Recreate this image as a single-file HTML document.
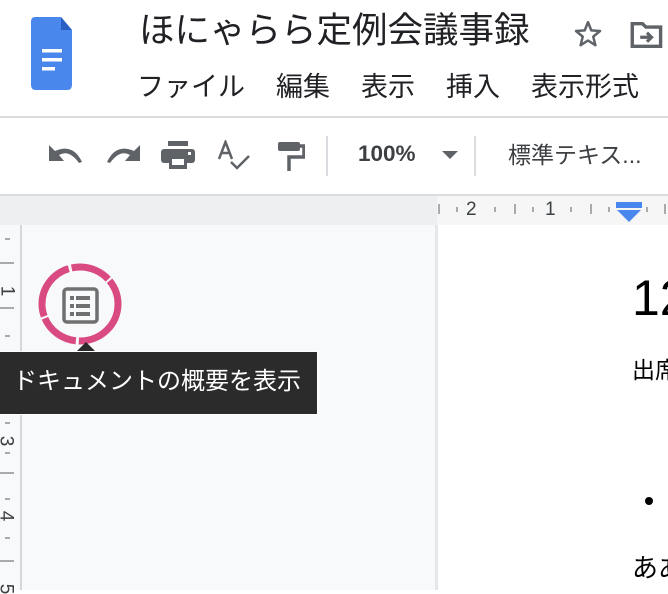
<!DOCTYPE html>
<html><head><meta charset="utf-8"><style>
*{margin:0;padding:0;box-sizing:border-box}
body{width:668px;height:590px;overflow:hidden;background:#fff;position:relative;font-family:"Liberation Sans","Noto Sans CJK JP",sans-serif;color:#202124}
.a{position:absolute;white-space:nowrap}
</style></head><body>
<svg class="a" style="left:31px;top:17px" width="42" height="74" viewBox="0 0 42 74">
<path d="M4 0H30L41 13V68Q41 73 36 73H5Q0 73 0 68V5Q0 0 4 0Z" fill="#4a87ec"/>
<path d="M30 0L41 13H30Z" fill="#2a5fc4"/>
<rect x="11" y="32" width="20" height="3.5" fill="#fff"/><rect x="11" y="41" width="20" height="3.5" fill="#fff"/><rect x="11" y="50" width="13" height="3.5" fill="#fff"/>
</svg>
<div class="a" style="left:139px;top:8px;font-size:35.5px;line-height:44px">ほにゃらら定例会議事録</div>
<svg class="a" style="left:572px;top:19px" width="32" height="30" viewBox="0 0 24 24"><path d="M12 2.5l2.6 6.6 7 .5-5.4 4.5 1.7 6.9L12 17.2 6.1 21l1.7-6.9-5.4-4.5 7-.5z" fill="none" stroke="#5f6368" stroke-width="2" stroke-linejoin="round"/></svg>
<svg class="a" style="left:630px;top:20px" width="34" height="30" viewBox="0 0 30 26"><path d="M2 3h9l3 3h13v17H2z" fill="none" stroke="#5f6368" stroke-width="3"/><path d="M9 15h9M15 11l4 4-4 4" fill="none" stroke="#5f6368" stroke-width="2.8"/></svg>
<div class="a" style="left:137px;top:70px;font-size:27px;line-height:34px">ファイル</div>
<div class="a" style="left:276px;top:70px;font-size:27px;line-height:34px">編集</div>
<div class="a" style="left:361px;top:70px;font-size:27px;line-height:34px">表示</div>
<div class="a" style="left:446px;top:70px;font-size:27px;line-height:34px">挿入</div>
<div class="a" style="left:531px;top:70px;font-size:27px;line-height:34px">表示形式</div>
<div class="a" style="left:0;top:116px;width:668px;height:2px;background:#dadce0"></div>
<svg class="a" style="left:49px;top:143px" width="34" height="22" viewBox="0 0 34 22"><path d="M0 2V18H15L10 12Q20 6 30 20L33 19Q24 0 6 8Z" fill="#5f6368"/></svg>
<svg class="a" style="left:106px;top:143px" width="34" height="22" viewBox="0 0 34 22"><g transform="translate(34 0) scale(-1 1)"><path d="M0 2V18H15L10 12Q20 6 30 20L33 19Q24 0 6 8Z" fill="#5f6368"/></g></svg>
<svg class="a" style="left:161px;top:141px" width="34" height="28" viewBox="0 0 34 28"><rect x="7" y="0" width="20" height="5" fill="#5f6368"/><rect x="0" y="8" width="34" height="14" rx="3" fill="#5f6368"/><rect x="8" y="15" width="18" height="13" fill="#5f6368"/><rect x="11" y="18" width="12" height="6" fill="#fff"/><rect x="27" y="11" width="3" height="3" fill="#fff"/></svg>
<svg class="a" style="left:218px;top:140px" width="34" height="31" viewBox="0 0 34 31"><path d="M1 19L7.5 2L14 19M4 13H11" fill="none" stroke="#5f6368" stroke-width="2.5"/><path d="M13 22l6 6 12-12" fill="none" stroke="#5f6368" stroke-width="2.5"/></svg>
<svg class="a" style="left:278px;top:142px" width="27" height="29" viewBox="0 0 27 29"><rect x="0" y="0" width="22" height="9" rx="2" fill="#5f6368"/><path d="M22 4H26V15H11V29" fill="none" stroke="#5f6368" stroke-width="3.5"/></svg>
<div class="a" style="left:326px;top:136px;width:2px;height:40px;background:#dadce0"></div>
<div class="a" style="left:358px;top:140px;font-size:22.5px;line-height:28px;color:#3c4043;font-weight:bold;-webkit-text-stroke:0;font-weight:600">100%</div>
<svg class="a" style="left:442px;top:151px" width="16" height="9"><path d="M0 0H16L8 8Z" fill="#5f6368"/></svg>
<div class="a" style="left:474px;top:136px;width:2px;height:40px;background:#dadce0"></div>
<div class="a" style="left:508px;top:140px;font-size:23px;line-height:30px;color:#3c4043">標準テキス...</div>
<div class="a" style="left:0;top:194px;width:668px;height:2px;background:#dadce0"></div>
<div class="a" style="left:0;top:196px;width:668px;height:29px;background:#eeeff1"></div>
<div class="a" style="left:437px;top:196px;width:231px;height:29px;background:#f6f6f6"></div>
<div class="a" style="left:438px;top:204px;width:2px;height:10px;background:#aaa"></div>
<div class="a" style="left:456px;top:207px;width:2px;height:5px;background:#aaa"></div>
<div class="a" style="left:466px;top:199px;font-size:19px;color:#3c4043">2</div>
<div class="a" style="left:494px;top:207px;width:2px;height:5px;background:#aaa"></div>
<div class="a" style="left:514px;top:204px;width:2px;height:10px;background:#aaa"></div>
<div class="a" style="left:532px;top:207px;width:2px;height:5px;background:#aaa"></div>
<div class="a" style="left:545px;top:199px;font-size:19px;color:#3c4043">1</div>
<div class="a" style="left:570px;top:207px;width:2px;height:5px;background:#aaa"></div>
<div class="a" style="left:590px;top:204px;width:2px;height:10px;background:#aaa"></div>
<div class="a" style="left:608px;top:207px;width:2px;height:5px;background:#aaa"></div>
<svg class="a" style="left:616px;top:202px" width="26" height="20"><rect x="0" y="0" width="26" height="6" fill="#4a87ec"/><path d="M1 8H25L13 20Z" fill="#4a87ec"/></svg>
<div class="a" style="left:646px;top:207px;width:2px;height:5px;background:#aaa"></div>
<div class="a" style="left:664px;top:204px;width:2px;height:10px;background:#aaa"></div>
<div class="a" style="left:0;top:225px;width:21px;height:365px;background:#f8f9fa"></div>
<div class="a" style="left:20px;top:225px;width:2px;height:365px;background:#d5d6d8"></div>
<div class="a" style="left:22px;top:225px;width:415px;height:365px;background:#f8f9fa"></div>
<div class="a" style="left:435px;top:225px;width:3px;height:365px;background:#e6e7e9"></div>
<div class="a" style="left:438px;top:225px;width:230px;height:365px;background:#fff"></div>
<div class="a" style="left:5px;top:238px;width:5px;height:2px;background:#aaa"></div>
<div class="a" style="left:0;top:262px;width:14px;height:2px;background:#aaa"></div>
<div class="a" style="left:5px;top:335px;width:5px;height:2px;background:#aaa"></div>
<div class="a" style="left:0;top:307px;width:14px;height:2px;background:#aaa"></div>
<div class="a" style="left:1px;top:280px;font-size:19px;transform:rotate(90deg);color:#3c4043">1</div>
<div class="a" style="left:0;top:358px;width:14px;height:2px;background:#aaa"></div>
<div class="a" style="left:5px;top:422px;width:5px;height:2px;background:#aaa"></div>
<div class="a" style="left:0px;top:430px;font-size:19px;transform:rotate(90deg);color:#3c4043">3</div>
<div class="a" style="left:5px;top:452px;width:5px;height:2px;background:#aaa"></div>
<div class="a" style="left:0;top:472px;width:14px;height:2px;background:#aaa"></div>
<div class="a" style="left:5px;top:498px;width:5px;height:2px;background:#aaa"></div>
<div class="a" style="left:0px;top:505px;font-size:19px;transform:rotate(90deg);color:#3c4043">4</div>
<div class="a" style="left:5px;top:537px;width:5px;height:2px;background:#aaa"></div>
<div class="a" style="left:0;top:560px;width:14px;height:2px;background:#aaa"></div>
<div class="a" style="left:0px;top:578px;font-size:19px;transform:rotate(90deg);color:#3c4043">5</div>
<svg class="a" style="left:36px;top:260px" width="90" height="90"><ellipse cx="44" cy="44" rx="38" ry="37" fill="none" stroke="#d94a82" stroke-width="7" stroke-dasharray="60 3 40 2"/></svg>
<svg class="a" style="left:62px;top:287px" width="37" height="37" viewBox="0 0 37 37"><rect x="2" y="2" width="33" height="33" rx="3" fill="none" stroke="#707070" stroke-width="3.5"/><rect x="8" y="9" width="4" height="4" fill="#707070"/><rect x="14" y="9" width="14" height="4" fill="#707070"/><rect x="8" y="17" width="4" height="4" fill="#707070"/><rect x="14" y="17" width="14" height="4" fill="#707070"/><rect x="8" y="25" width="4" height="4" fill="#707070"/><rect x="14" y="25" width="14" height="4" fill="#707070"/></svg>
<svg class="a" style="left:76px;top:340px" width="20" height="12"><path d="M0 12L10 2L20 12Z" fill="#2b2b2b"/></svg>
<div class="a" style="left:0;top:351px;width:318px;height:64px;background:#2b2b2b;border:1px solid #fff;border-left:none"></div>
<div class="a" style="left:13px;top:366px;font-size:24px;line-height:32px;color:#fff">ドキュメントの概要を表示</div>
<div class="a" style="left:632px;top:268px;font-size:50px;line-height:60px;color:#000">12</div>
<div class="a" style="left:632px;top:355px;font-size:23px;line-height:30px;color:#000">出席</div>
<div class="a" style="left:645px;top:497px;width:8px;height:8px;border-radius:50%;background:#000"></div>
<div class="a" style="left:632px;top:551px;font-size:26px;line-height:34px;color:#000">ああ</div>
</body></html>
